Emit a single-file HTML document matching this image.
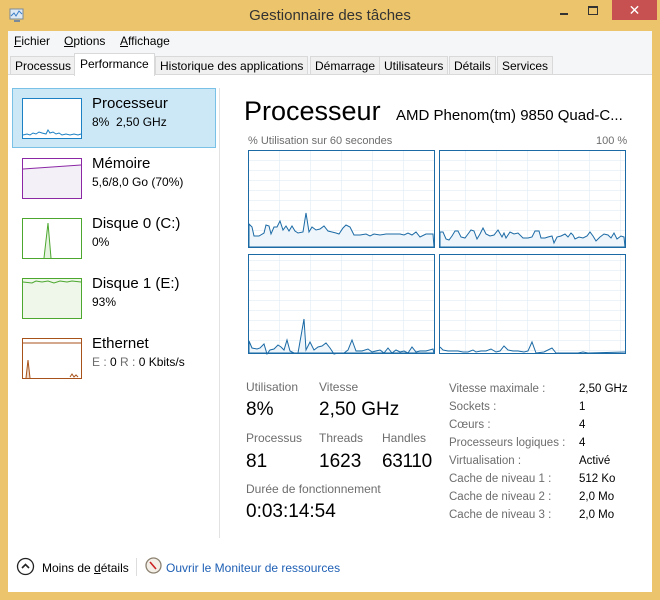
<!DOCTYPE html>
<html><head><meta charset="utf-8"><style>
*{margin:0;padding:0;box-sizing:border-box}
body{width:660px;height:600px;background:#ebc46b;font-family:"Liberation Sans",sans-serif;position:relative;overflow:hidden;color:#000}
.a{position:absolute;white-space:nowrap}
.g{color:#6d6d6d}
</style></head><body>
<div class="a" style="left:0;top:0;width:660px;height:31px;background:#ebc46b"></div>
<svg class="a" style="left:9px;top:8px" width="16" height="16"><rect x="1" y="1" width="13" height="10" fill="#dfe9f3" stroke="#7a8a9a"/><polyline points="2,8 5,5 7,8 10,3 13,6" fill="none" stroke="#3a7dc9"/><rect x="5" y="12" width="6" height="2" fill="#7a8a9a"/></svg>
<div class="a" style="left:0;width:660px;top:7px;text-align:center;font-size:15px;color:#333">Gestionnaire des tâches</div>
<div class="a" style="left:560px;top:13px;width:8px;height:2px;background:#333"></div>
<div class="a" style="left:588px;top:6px;width:10px;height:9px;border:1px solid #333;border-top-width:2px"></div>
<div class="a" style="left:612px;top:0;width:45px;height:20px;background:#c75050;color:#fff;text-align:center;font-size:14px;line-height:20px">✕</div>
<div class="a" style="left:8px;top:31px;width:644px;height:561px;background:#fff"></div>
<div class="a" style="left:8px;top:31px;width:644px;height:22px;background:#f5f6f7"></div>
<div class="a" style="left:14px;top:34px;font-size:12px"><u>F</u>ichier</div>
<div class="a" style="left:64px;top:34px;font-size:12px"><u>O</u>ptions</div>
<div class="a" style="left:120px;top:34px;font-size:12px"><u>A</u>ffichage</div>
<div class="a" style="left:8px;top:53px;width:644px;height:22px;background:#f5f6f7;border-bottom:1px solid #d9d9d9"></div>
<div class="a" style="font-size:12px;top:56px;left:10px;height:19px;border:1px solid #d9d9d9;background:#f0f0f0;padding:2px 4px">Processus</div>
<div class="a" style="font-size:12px;top:53px;left:74px;height:23px;border:1px solid #d9d9d9;border-bottom:none;background:#fff;padding:3px 5px">Performance</div>
<div class="a" style="font-size:12px;top:56px;left:155px;height:19px;border:1px solid #d9d9d9;background:#f0f0f0;padding:2px 4px">Historique des applications</div>
<div class="a" style="font-size:12px;top:56px;left:310px;height:19px;border:1px solid #d9d9d9;background:#f0f0f0;padding:2px 4px">Démarrage</div>
<div class="a" style="font-size:12px;top:56px;left:379px;height:19px;border:1px solid #d9d9d9;background:#f0f0f0;padding:2px 4px">Utilisateurs</div>
<div class="a" style="font-size:12px;top:56px;left:449px;height:19px;border:1px solid #d9d9d9;background:#f0f0f0;padding:2px 4px">Détails</div>
<div class="a" style="font-size:12px;top:56px;left:497px;height:19px;border:1px solid #d9d9d9;background:#f0f0f0;padding:2px 4px">Services</div>
<div class="a" style="left:12px;top:88px;width:204px;height:60px;background:#cce8f7;border:1px solid #7ac1e8"></div>
<div class="a" style="left:219px;top:88px;width:1px;height:450px;background:#e2e2e2"></div>
<svg class="a" style="left:22px;top:98px" width="60" height="282">
<rect x="0.5" y="0.5" width="59" height="40" fill="#fff" stroke="#1b80c4"/>
<polyline points="1,37 5,36 8,37 11,35 14,36 17,34 20,35 24,36 26,32 28,35 31,34 34,36 37,35 40,37 44,36 48,37 52,36 56,37 59,36" fill="none" stroke="#1b80c4"/>
<rect x="0.5" y="60.5" width="59" height="40" fill="#fff" stroke="#8b27a5"/>
<polygon points="1,71 59,67 59,100 1,100" fill="#f4f0f7"/><polyline points="1,71 59,67" stroke="#8b27a5" fill="none"/>
<rect x="0.5" y="120.5" width="59" height="40" fill="#fff" stroke="#4ca72f"/>
<polyline points="22,160 26,125 29,160" fill="#e6f3e0" stroke="#4ca72f"/>
<rect x="0.5" y="180.5" width="59" height="40" fill="#eef7ea" stroke="#4ca72f"/>
<polyline points="1,184 10,185 14,183 20,184 26,183 32,185 38,183 45,184 50,183 59,184" fill="none" stroke="#4ca72f"/>
<rect x="0.5" y="240.5" width="59" height="40" fill="#fff" stroke="#a7521a"/>
<line x1="1" y1="245" x2="59" y2="245" stroke="#a7521a"/>
<polyline points="4,280 6,262 8,280" fill="#f0d9c8" stroke="#a7521a"/>
<polyline points="48,279 50,276 52,279 54,277 56,279" fill="none" stroke="#a7521a"/>
</svg>
<div class="a" style="left:92px;top:95px;font-size:15px">Processeur</div>
<div class="a" style="left:92px;top:115px;font-size:12px">8%&nbsp; 2,50 GHz</div>
<div class="a" style="left:92px;top:155px;font-size:15px">Mémoire</div>
<div class="a" style="left:92px;top:175px;font-size:12px">5,6/8,0 Go (70%)</div>
<div class="a" style="left:92px;top:215px;font-size:15px">Disque 0 (C:)</div>
<div class="a" style="left:92px;top:235px;font-size:12px">0%</div>
<div class="a" style="left:92px;top:275px;font-size:15px">Disque 1 (E:)</div>
<div class="a" style="left:92px;top:295px;font-size:12px">93%</div>
<div class="a" style="left:92px;top:335px;font-size:15px">Ethernet</div>
<div class="a" style="left:92px;top:355px;font-size:12px"><span class="g">E :</span> 0 <span class="g">R :</span> 0 Kbits/s</div>
<div class="a" style="left:244px;top:96px;font-size:27px">Processeur</div>
<div class="a" style="left:396px;top:107px;font-size:15px">AMD Phenom(tm) 9850 Quad-C...</div>
<div class="a g" style="left:248px;top:135px;font-size:11px">% Utilisation sur 60 secondes</div>
<div class="a g" style="left:596px;top:135px;font-size:11px">100 %</div>
<svg class="a" style="left:248px;top:150px" width="380" height="205">
<defs><pattern id="p" width="31" height="10" patternUnits="userSpaceOnUse"><path d="M0,0H31M0,0V10" stroke="#d9eaf4" fill="none"/></pattern></defs>
<rect x="0.5" y="0.5" width="186" height="97" fill="url(#p)" stroke="#1b6aa5"/>
<polygon points="1,74 4,77 6,86 11,86 16,83 18,75 21,76 23,84 26,77 29,77 32,71 35,80 38,76 41,81 44,76 47,81 50,83 55,82 58,63 61,82 64,77 68,80 72,79 76,76 80,81 84,82 88,83 91,84 95,78 98,75 102,77 106,85 112,85 118,84 122,86 126,84 132,85 138,84 144,84 148,84 152,84 156,85 160,83 164,85 168,82 172,87 178,84 185,84 186,97 1,97" fill="#eef5fb" stroke="#1b6aa5"/>
<rect x="191.5" y="0.5" width="186" height="97" fill="url(#p)" stroke="#1b6aa5"/>
<polygon points="192,82 195,82 198,89 201,90 204,86 207,81 210,81 213,87 217,88 220,84 223,80 226,81 229,89 232,84 235,78 238,84 242,86 246,85 250,80 254,87 256,83 258,88 262,82 266,84 270,83 275,88 280,88 284,87 287,81 291,81 293,88 297,88 300,87 304,86 306,93 309,87 313,86 317,84 320,87 323,83 325,85 327,89 331,87 335,88 339,86 342,82 345,86 348,91 352,87 356,84 360,85 363,88 366,83 369,89 373,86 376,87 377,97 192,97" fill="#eef5fb" stroke="#1b6aa5"/>
<rect x="0.5" y="104.5" width="186" height="99" fill="url(#p)" stroke="#1b6aa5"/>
<polygon points="1,191 4,198 9,199 12,198 16,194 19,204 22,200 26,199 30,195 33,197 36,200 39,190 42,201 46,203 50,203 56,169 58,200 62,192 66,200 70,197 74,196 78,193 82,198 86,204 90,203 96,203 100,200 104,190 108,201 114,201 120,199 124,202 128,201 132,200 136,203 140,198 144,203 148,200 152,202 156,201 160,203 164,197 168,202 172,201 178,201 185,199 186,203 1,203" fill="#eef5fb" stroke="#1b6aa5"/>
<rect x="191.5" y="104.5" width="186" height="99" fill="url(#p)" stroke="#1b6aa5"/>
<polyline points="192,197 195,200 200,201 205,201 210,201 215,202 220,202 225,200 228,202 233,201 238,201 243,199 248,202 252,201 256,196 260,200 265,201 270,201 276,202 280,201 284,192 288,203 296,202 300,200 304,198 308,203 330,203 335,202 340,203 377,202" fill="none" stroke="#1b6aa5"/>
</svg>
<div class="a g" style="left:246px;top:380px;font-size:12px">Utilisation</div>
<div class="a g" style="left:319px;top:380px;font-size:12px">Vitesse</div>
<div class="a" style="left:246px;top:399px;font-size:19px">8%</div>
<div class="a" style="left:319px;top:399px;font-size:19px">2,50 GHz</div>
<div class="a g" style="left:246px;top:431px;font-size:12px">Processus</div>
<div class="a g" style="left:319px;top:431px;font-size:12px">Threads</div>
<div class="a g" style="left:382px;top:431px;font-size:12px">Handles</div>
<div class="a" style="left:246px;top:451px;font-size:19px">81</div>
<div class="a" style="left:319px;top:451px;font-size:19px">1623</div>
<div class="a" style="left:382px;top:451px;font-size:19px;letter-spacing:-0.3px">63110</div>
<div class="a g" style="left:246px;top:482px;font-size:12px">Durée de fonctionnement</div>
<div class="a" style="left:246px;top:501px;font-size:19px">0:03:14:54</div>
<div class="a g" style="left:449px;top:380px;font-size:11.5px;line-height:18px">Vitesse maximale :<br>Sockets :<br>Cœurs :<br>Processeurs logiques :<br>Virtualisation :<br>Cache de niveau 1 :<br>Cache de niveau 2 :<br>Cache de niveau 3 :</div>
<div class="a" style="left:579px;top:380px;font-size:11.5px;line-height:18px">2,50 GHz<br>1<br>4<br>4<br>Activé<br>512 Ko<br>2,0 Mo<br>2,0 Mo</div>
<svg class="a" style="left:16px;top:557px" width="20" height="20"><circle cx="9.5" cy="9.5" r="8" fill="#fff" stroke="#222" stroke-width="1.3"/><polyline points="6,11 9.5,7.5 13,11" fill="none" stroke="#222" stroke-width="1.6"/></svg>
<div class="a" style="left:42px;top:561px;font-size:12px">Moins de <u>d</u>étails</div>
<div class="a" style="left:136px;top:558px;width:1px;height:18px;background:#ddd"></div>
<svg class="a" style="left:145px;top:557px" width="18" height="18"><circle cx="8.5" cy="8.5" r="7.5" fill="#f3eee6" stroke="#8a8070" stroke-width="1.3"/><line x1="5" y1="5" x2="11" y2="12" stroke="#c22" stroke-width="1.6"/></svg>
<div class="a" style="left:166px;top:561px;font-size:12px;color:#1e5fb4">Ouvrir le Moniteur de ressources</div>
</body></html>
